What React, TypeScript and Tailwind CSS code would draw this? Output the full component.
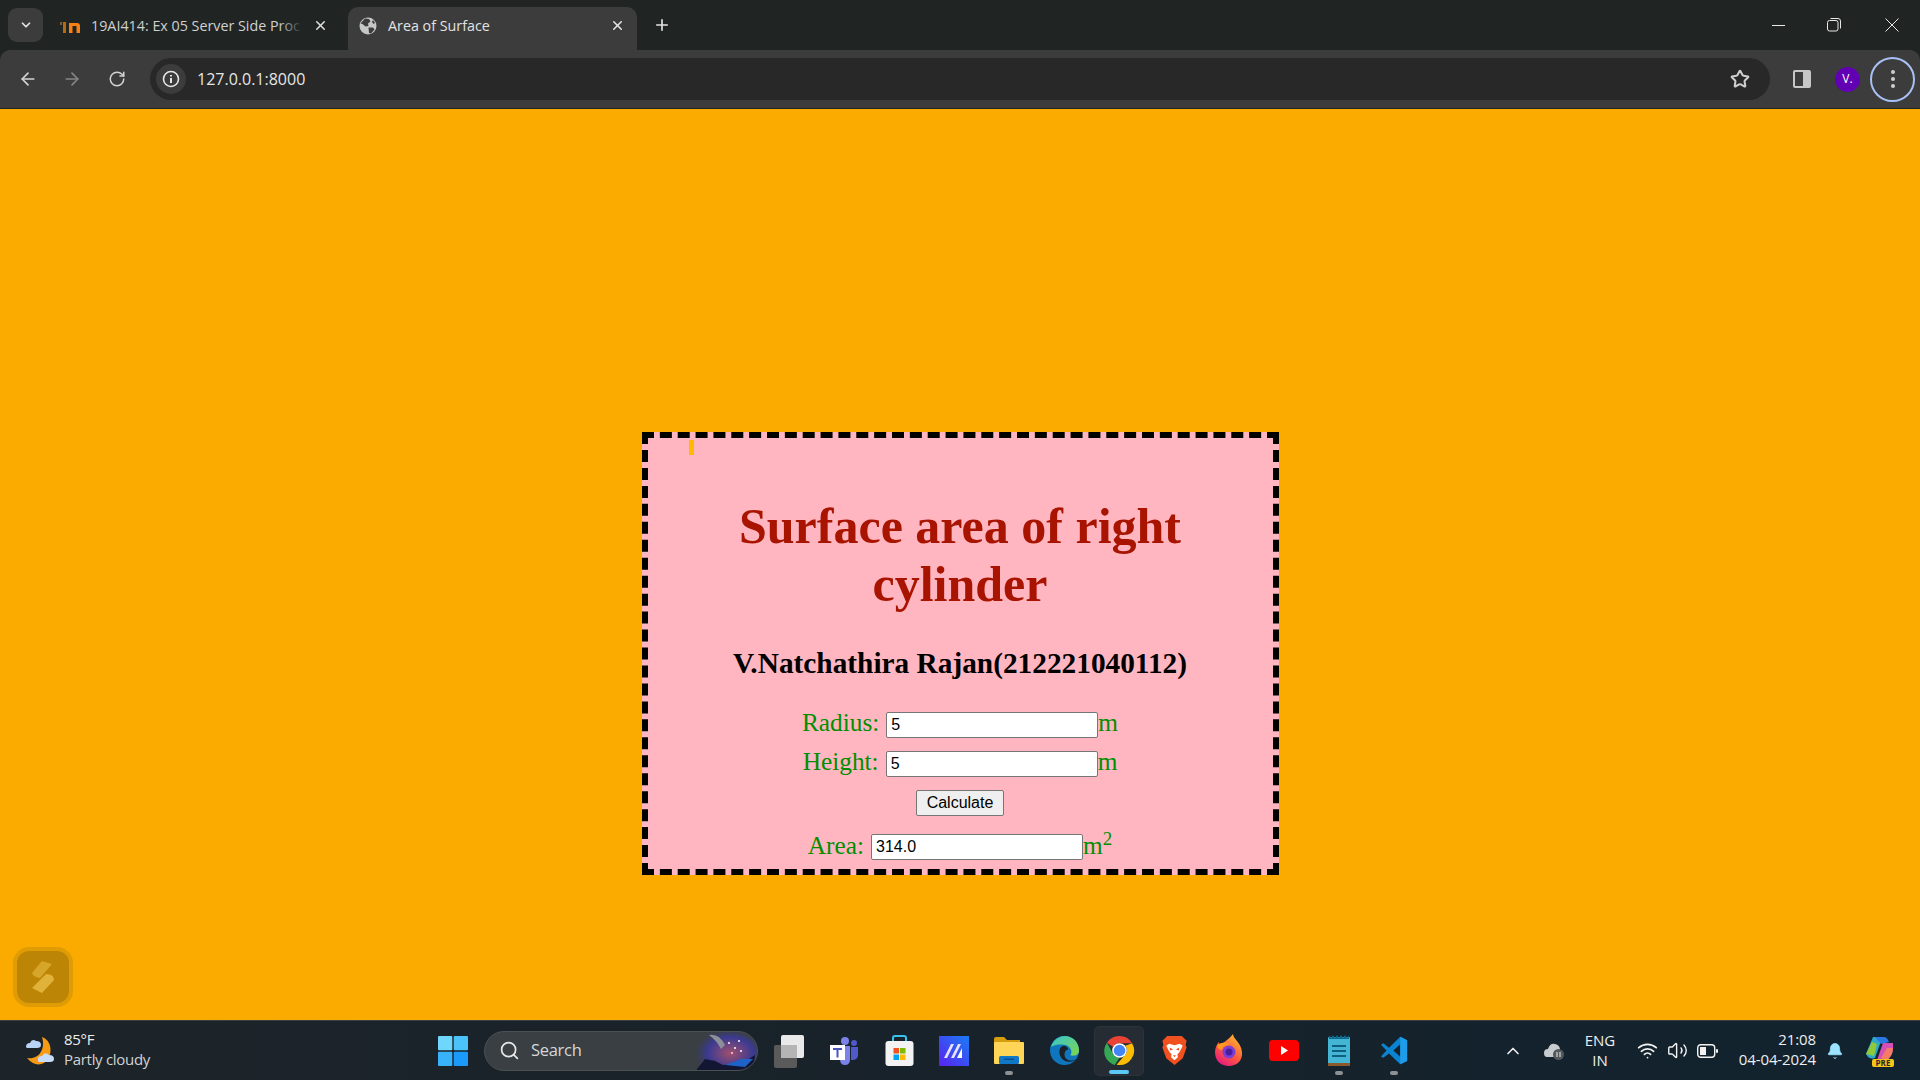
import React from 'react';
import { ArrowLeft, ArrowRight, ChevronDown, ChevronUp, Plus, RotateCw, Star, X, Search, Wifi, Volume2, Bell } from 'lucide-react';

const uiFont = { fontFamily: '"Open Sans", "Noto Sans", sans-serif' };

const Globe = () => (
  <svg width="18" height="18" viewBox="0 0 18 18">
    <circle cx="9" cy="9" r="8.5" fill="#c4c7c5" />
    <path d="M6 1.5 L10 2 L11.5 4.5 L9 6.5 L9.5 9 L6.5 9.5 L3.5 7 L1.5 6.5 Z" fill="#3c3c3c" />
    <path d="M9.5 10.5 L14 10.5 L15.5 12.5 L12 16.5 L10 16 Z M14 3 L16 6 L14.5 7 L13 5 Z" fill="#3c3c3c" />
  </svg>
);

const MoodleMark = () => (
  <svg width="21" height="14" viewBox="0 0 21 14">
    <rect x="0" y="3" width="2" height="3" fill="#8a5a20" />
    <rect x="3" y="3" width="3" height="11" fill="#b86a10" />
    <path d="M9 14 V4 H17 Q20 4 20 7 V14 H16.500 V7 H12.500 V14 Z" fill="#f98012" />
  </svg>
);

const Chrome = () => (
  <svg width="31" height="31" viewBox="0 0 32 32">
    <path d="M16 1 A15 15 0 0 1 29 8.500 H16 A7.500 7.500 0 0 0 9.500 12.300 L3 8 A15 15 0 0 1 16 1Z" fill="#ea4335" />
    <path d="M3 8 L9.500 19.500 A7.500 7.500 0 0 0 16 23.500 L11 31 A15 15 0 0 1 3 8Z" fill="#34a853" />
    <path d="M29 8.500 A15 15 0 0 1 13 30.700 L22.500 19.500 A7.500 7.500 0 0 0 22 11 Z" fill="#fbbc04" />
    <circle cx="16" cy="16" r="7.500" fill="#fff" />
    <circle cx="16" cy="16" r="6" fill="#4285f4" />
  </svg>
);

const Edge = () => (
  <svg width="31" height="31" viewBox="0 0 32 32">
    <defs>
      <linearGradient id="edgeA" x1="0" y1="0" x2="1" y2="1">
        <stop offset="0" stopColor="#37c6d0" />
        <stop offset="1" stopColor="#7fd64a" />
      </linearGradient>
    </defs>
    <circle cx="16" cy="16" r="15" fill="#0f76bd" />
    <path d="M2 13 C4 4 12 1 16 1 C25 1 31 8 31 16 C31 21 26 22 22 21 C25 17 22 11 16 10 C9 9 3 11 2 13Z" fill="url(#edgeA)" />
    <path d="M15 11 C10 12 9 20 14 25 C19 29 25 28 28 25 C23 28 16 26 16 20 C16 17 18 15 20 15 C19 12 17 11 15 11Z" fill="#1b2127" />
  </svg>
);

const Brave = () => (
  <svg width="27" height="31" viewBox="0 0 27 32">
    <path d="M6 1 H21 L26 6 L25 10 L26 13 L22 24 L13.500 31 L5 24 L1 13 L2 10 L1 6 Z" fill="#f1511e" />
    <path d="M8 9 L13.500 10.500 L19 9 L22 11 L19 17 L16.500 20 L17 23 L13.500 26 L10 23 L10.500 20 L8 17 L5 11 Z" fill="#fff" />
    <path d="M8.500 13 L12 15 L9 16Z M18.500 13 L15 15 L18 16Z M12 21 H15 L13.500 23Z" fill="#f1511e" />
  </svg>
);

const Firefox = () => (
  <svg width="30" height="33" viewBox="0 0 30 33">
    <defs>
      <linearGradient id="foxA" x1="0.8" y1="0" x2="0.2" y2="1">
        <stop offset="0" stopColor="#ffbd2e" />
        <stop offset="0.55" stopColor="#ff5a3c" />
        <stop offset="1" stopColor="#e31587" />
      </linearGradient>
    </defs>
    <path d="M19 0 C19 5 27 8 28 18 C29 27 22 32 15 32 C7 32 1 27 1 18 C1 14 3 10 5 8 C5 10 6 11 7 12 C8 8 14 7 19 0Z" fill="url(#foxA)" />
    <circle cx="15" cy="18" r="6.500" fill="#7b3fd6" />
    <circle cx="15" cy="18" r="3.500" fill="#4a1d9e" />
    <path d="M3 12 C7 7 13 9 15 11 C10 11 8 13 8 16 C6 16 4 15 3 12Z" fill="#ff9a1f" />
  </svg>
);

const Store = () => (
  <svg width="29" height="32" viewBox="0 0 29 32">
    <path d="M8 7 V3 Q8 1 10 1 H19 Q21 1 21 3 V7" fill="none" stroke="#35c2f0" strokeWidth="2" />
    <rect x="0.500" y="6" width="28" height="25" rx="3" fill="#f3f3f3" />
    <rect x="8.500" y="13" width="5.500" height="5.500" fill="#f25022" />
    <rect x="15" y="13" width="5.500" height="5.500" fill="#7fba00" />
    <rect x="8.500" y="19.500" width="5.500" height="5.500" fill="#00a4ef" />
    <rect x="15" y="19.500" width="5.500" height="5.500" fill="#ffb900" />
  </svg>
);

const Notepad = () => (
  <svg width="22" height="31" viewBox="0 0 22 31">
    <rect x="0" y="2" width="22" height="29" rx="1" fill="#45b5d6" />
    <rect x="0" y="28" width="22" height="3" fill="#8a5a2c" />
    <path d="M1 0 L3 3 L5 0 L7 3 L9 0 L11 3 L13 0 L15 3 L17 0 L19 3 L21 0 V4 H1Z" fill="#0e6a8c" />
    <rect x="4" y="10" width="14" height="2" fill="#0e5f80" />
    <rect x="4" y="15" width="14" height="2" fill="#0e5f80" />
    <rect x="4" y="20" width="14" height="2" fill="#0e5f80" />
  </svg>
);

const VsCode = () => (
  <svg width="30" height="31" viewBox="0 0 24 24">
    <path d="M17 1 L22.500 3.700 V20.300 L17 23 L8 14.300 L3.500 17.800 L1.500 16.700 L6 12 L1.500 7.300 L3.500 6.200 L8 9.700 Z M17 7 L11.500 12 L17 17 Z" fillRule="evenodd" fill="#0a84d0" />
    <path d="M17 1 L22.500 3.700 V20.300 L17 23 Z" fill="#1e9cea" />
  </svg>
);

const taskIcons: { name: string; icon: React.ReactNode; mark?: 'open' | 'active' }[] = [
  {
    name: 'task view',
    icon: (
      <svg width="32" height="34" viewBox="0 0 32 34">
        <rect x="1" y="11" width="23" height="23" rx="2" fill="#5a5a5a" />
        <rect x="8" y="1" width="23" height="23" rx="2" fill="#e9e9e9" />
        <rect x="8" y="11" width="16" height="13" fill="#b5b5b5" />
      </svg>
    ),
  },
  {
    name: 'teams',
    icon: (
      <svg width="28" height="30" viewBox="0 0 28 30">
        <circle cx="15" cy="5" r="4" fill="#7b83eb" />
        <circle cx="24" cy="7" r="3" fill="#5059c9" />
        <path d="M10 10 H20 V23 Q20 29 15 29 Q10 29 10 23 Z" fill="#7b83eb" />
        <path d="M21 11 H28 V19 Q28 24 22 24 L21 24 Z" fill="#5059c9" />
        <rect x="0" y="9" width="15" height="15" fill="#fff" />
        <path d="M3 12 H12 V14 H8.500 V21.500 H6.500 V14 H3Z" fill="#4b53bc" />
      </svg>
    ),
  },
  { name: 'store', icon: <Store /> },
  {
    name: 'mathpix',
    icon: (
      <svg width="30" height="30" viewBox="0 0 30 30">
        <defs>
          <linearGradient id="appA" x1="1" y1="0" x2="0" y2="1">
            <stop offset="0" stopColor="#1a7cf5" />
            <stop offset="1" stopColor="#5a22f0" />
          </linearGradient>
        </defs>
        <rect width="30" height="30" fill="url(#appA)" />
        <path d="M5 22 L12 8 H15 L8 22 Z M12 22 L19 8 H22 L15 22 Z" fill="#e6e3ff" />
        <path d="M18 22 L23 12 V22 Z" fill="#fff" />
      </svg>
    ),
  },
  {
    name: 'files',
    icon: (
      <svg width="30" height="27" viewBox="0 0 30 27">
        <path d="M0 2 Q0 0 2 0 H10 L13 3 H26 V8 H0Z" fill="#d69d0e" />
        <rect x="0" y="5" width="30" height="22" rx="1" fill="#ffd558" />
        <rect x="5" y="19" width="20" height="8" rx="1.500" fill="#0f78c8" />
        <rect x="10" y="21.500" width="10" height="1.500" fill="#0a4f8c" />
      </svg>
    ),
    mark: 'open',
  },
  { name: 'edge', icon: <Edge /> },
  { name: 'chrome', icon: <Chrome />, mark: 'active' },
  { name: 'brave', icon: <Brave /> },
  { name: 'firefox', icon: <Firefox /> },
  {
    name: 'youtube',
    icon: (
      <svg width="30" height="21" viewBox="0 0 30 21">
        <rect width="30" height="21" rx="4" fill="#f00" />
        <path d="M12 6 L19 10.500 L12 15 Z" fill="#fff" />
      </svg>
    ),
  },
  { name: 'notepad', icon: <Notepad />, mark: 'open' },
  { name: 'vscode', icon: <VsCode />, mark: 'open' },
];

const TaskIcon = ({ icon, mark }: { icon: React.ReactNode; mark?: 'open' | 'active' }) => (
  <div className={`relative flex h-[50px] w-[50px] shrink-0 items-center justify-center rounded-[5px] ${mark === 'active' ? 'border border-[#2b3238] bg-[#252c33]' : ''}`}>
    {icon}
    {mark === 'open' && <span className="absolute bottom-[1px] left-1/2 h-[4px] w-[8px] -translate-x-1/2 rounded-full bg-[#8d9194]" />}
    {mark === 'active' && <span className="absolute bottom-[1px] left-1/2 h-[4px] w-[20px] -translate-x-1/2 rounded-full bg-[#5cc8f8]" />}
  </div>
);

const Browser = () => (
  <header className="h-[109px] shrink-0 bg-[#202423] text-[#e3e3e3]" style={uiFont}>
    <div className="flex h-[50px] items-end">
      <div className="mb-[8px] ml-[8px] flex h-[34px] w-[35px] items-center justify-center rounded-[9px] bg-[#3c3c3c]">
        <ChevronDown size={14} strokeWidth={3} />
      </div>
      <div className="ml-[17px] flex h-[43px] w-[288px] items-center pb-[6px]">
        <MoodleMark />
        <div className="relative ml-[10px] w-[212px] overflow-hidden whitespace-nowrap text-[14.3px] text-[#cfd1d0]">
          19AI414: Ex 05 Server Side Proc
          <span className="absolute inset-y-0 right-0 w-[24px] bg-gradient-to-r from-transparent to-[#202423]" />
        </div>
        <X size={15} strokeWidth={2.5} className="ml-[10px] text-[#dcdcdc]" />
      </div>
      <div className="flex h-[43px] w-[289px] items-center rounded-t-[10px] bg-[#3c3c3c] pb-[6px] pl-[11px]">
        <Globe />
        <span className="ml-[11px] w-[222px] text-[14.3px] text-[#e3e3e3]">Area of Surface</span>
        <X size={15} strokeWidth={2.5} className="text-[#e3e3e3]" />
      </div>
      <Plus size={18} strokeWidth={2.2} className="mb-[16px] ml-[16px]" />
      <div className="ml-auto mb-[18px] flex items-center">
        <span className="h-[1px] w-[13px] bg-[#e8e8e8]" />
        <svg width="14" height="14" viewBox="0 0 14 14" className="ml-[42px]" fill="none" stroke="#e8e8e8">
          <rect x="0.500" y="2.500" width="10.500" height="10.500" rx="2" />
          <path d="M3.500 0.500 H11 Q13.500 0.500 13.500 3 V10.500" />
        </svg>
        <svg width="14" height="14" viewBox="0 0 14 14" className="ml-[44px] mr-[21px]" stroke="#e8e8e8" strokeWidth="1">
          <path d="M0.500 0.500 L13.500 13.500 M13.500 0.500 L0.500 13.500" />
        </svg>
      </div>
    </div>
    <div className="flex h-[58px] items-center rounded-t-[10px] bg-[#3c3c3c]">
      <ArrowLeft size={20} className="ml-[18px] text-[#d4d4d4]" />
      <ArrowRight size={20} className="ml-[24px] text-[#858585]" />
      <RotateCw size={18} className="ml-[26px] text-[#d4d4d4]" />
      <div className="ml-[24px] flex h-[42px] w-[1620px] items-center rounded-full bg-[#282828] pl-[6px]">
        <div className="flex h-[30px] w-[30px] items-center justify-center rounded-full bg-[#3c3c3c]">
          <svg width="18" height="18" viewBox="0 0 18 18" fill="none" stroke="#e6e6e6">
            <circle cx="9" cy="9" r="7.500" strokeWidth="1.600" />
            <path d="M9 8 V13 M9 5 V6.500" strokeWidth="2" />
          </svg>
        </div>
        <span className="ml-[11px] text-[16px] text-[#e6e6e6]">127.0.0.1:8000</span>
        <Star size={20} strokeWidth={2.4} className="ml-auto mr-[20px] text-[#cfcfcf]" />
      </div>
      <svg width="18" height="18" viewBox="0 0 18 18" className="ml-[23px]">
        <rect width="18" height="18" rx="2" fill="#c7c7c7" />
        <rect x="2" y="2" width="8" height="14" fill="#3c3c3c" />
      </svg>
      <div className="ml-[24px] flex h-[25px] w-[25px] items-center justify-center rounded-full bg-[#6200b3] text-[12px] text-white">V.</div>
      <div className="ml-[10px] flex h-[45px] w-[45px] flex-col items-center justify-center gap-[3px] rounded-full border-[2px] border-[#a8c0f5]">
        <span className="h-[4px] w-[4px] rounded-full bg-[#cfcfcf]" />
        <span className="h-[4px] w-[4px] rounded-full bg-[#cfcfcf]" />
        <span className="h-[4px] w-[4px] rounded-full bg-[#cfcfcf]" />
      </div>
    </div>
  </header>
);

const Taskbar = () => (
  <footer className="relative flex h-[60px] shrink-0 items-center border-t border-[#3b3f42] bg-gradient-to-r from-[#1c2429] via-[#18222a] to-[#11232f] text-white" style={uiFont}>
    <svg width="32" height="30" viewBox="0 0 32 30" className="ml-[24px] shrink-0">
      <path d="M18 1 C28 4 30 20 20 27 C14 30 8 28 3 22 C14 24 22 14 18 1Z" fill="#f79a14" />
      <path d="M2 11 Q2 7 6 7 Q8 2 12 5 Q17 5 17 9 Q17 12 13 12 H4 Q2 12 2 11Z" fill="#b9d4f7" />
      <path d="M14 25 Q13 20 18 20 Q21 15 25 19 Q30 19 30 23 Q30 26 26 26 H16 Q14 26 14 25Z" fill="#c6dcf8" />
    </svg>
    <div className="mb-[4px] ml-[8px] flex w-[120px] shrink-0 flex-col text-[15px] leading-[20px] tracking-[-0.3px] text-[#eceeee]">
      <span>85°F</span>
      <span className="text-[#d0d3d4]">Partly cloudy</span>
    </div>
    <svg width="30" height="30" viewBox="0 0 30 30" className="ml-[254px] shrink-0">
      <rect x="0" y="0" width="14.300" height="14.300" rx="1" fill="#6fd6fc" />
      <rect x="15.700" y="0" width="14.300" height="14.300" rx="1" fill="#4cc2fa" />
      <rect x="0" y="15.700" width="14.300" height="14.300" rx="1" fill="#38b2fb" />
      <rect x="15.700" y="15.700" width="14.300" height="14.300" rx="1" fill="#1a9bfb" />
    </svg>
    <div className="relative ml-[16px] flex h-[40px] w-[274px] shrink-0 items-center overflow-hidden rounded-full border border-[#4b5053] bg-[#3a3f43] pl-[14px]">
      <Search size={21} className="text-[#e5e5e5]" />
      <span className="ml-[11px] text-[16.5px] tracking-[-0.3px] text-[#d5d7d8]">Search</span>
      <svg width="62" height="40" viewBox="0 0 62 40" className="ml-auto shrink-0">
        <defs>
          <radialGradient id="night" cx="0.55" cy="0.5" r="0.6">
            <stop offset="0" stopColor="#a0506e" />
            <stop offset="0.6" stopColor="#3a3a92" />
            <stop offset="1" stopColor="#3a3f43" stopOpacity="0" />
          </radialGradient>
        </defs>
        <ellipse cx="32" cy="22" rx="32" ry="22" fill="url(#night)" />
        <path d="M14 4 Q24 2 30 14 L26 18 Q22 10 14 4Z" fill="#8d8f98" />
        <path d="M2 38 L10 28 L20 30 L28 34 L48 32 L60 24 L58 40 H2Z" fill="#121633" />
        <path d="M30 34 L46 28 L58 28 L50 36Z" fill="#1f62c8" />
        <circle cx="34" cy="12" r="1" fill="#fff" />
        <circle cx="40" cy="17" r="1" fill="#fff" />
        <circle cx="44" cy="10" r="1" fill="#fff" />
        <circle cx="37" cy="22" r="1" fill="#ffd0d0" />
        <circle cx="46" cy="20" r="1" fill="#fff" />
      </svg>
    </div>
    <div className="ml-[6px] flex shrink-0 gap-[5px]">
      {taskIcons.map((t) => (
        <TaskIcon key={t.name} icon={t.icon} mark={t.mark} />
      ))}
    </div>
    <ChevronUp size={20} strokeWidth={2} className="ml-[84px] shrink-0 text-[#eeeeee]" />
    <svg width="22" height="18" viewBox="0 0 22 18" className="ml-[20px] shrink-0">
      <path d="M1 11 Q1 7 5 7 Q7 1 12 2 Q17 3 17 8 Q20 9 19 12 L16 15 H4 Q1 15 1 11Z" fill="#c9ccce" />
      <circle cx="15.500" cy="12.500" r="5.500" fill="#53585b" />
      <path d="M14 10 V15 M17 10 V15" stroke="#eee" strokeWidth="1" />
    </svg>
    <div className="mb-[2px] ml-[15px] flex w-[40px] shrink-0 flex-col items-center text-[15px] leading-[20px] text-[#eeeeee]">
      <span>ENG</span>
      <span>IN</span>
    </div>
    <Wifi size={21} strokeWidth={2} className="ml-[17px] shrink-0 text-[#f2f2f2]" />
    <Volume2 size={21} strokeWidth={1.6} className="ml-[9px] shrink-0 text-[#f2f2f2]" />
    <svg width="21" height="14" viewBox="0 0 21 14" className="ml-[9px] shrink-0">
      <rect x="0.700" y="0.700" width="17" height="12.600" rx="3" fill="none" stroke="#f2f2f2" strokeWidth="1.400" />
      <rect x="3" y="3" width="6" height="8" fill="#f2f2f2" />
      <rect x="19" y="5" width="2" height="4" rx="1" fill="#f2f2f2" />
    </svg>
    <div className="mb-[4px] ml-[8px] flex w-[90px] shrink-0 flex-col items-end text-[15px] leading-[20px] tracking-[-0.1px] text-[#eeeeee]">
      <span>21:08</span>
      <span className="whitespace-nowrap">04-04-2024</span>
    </div>
    <Bell size={18} fill="#9ae4ff" strokeWidth={1} className="ml-[10px] shrink-0 text-[#9ae4ff]" />
    <div className="relative ml-[21px] h-[30px] w-[30px] shrink-0">
      <svg width="30" height="28" viewBox="0 0 30 28">
        <path d="M8 1 H19 L15 8 L10 22 Q4 24 1 18 Z" fill="#2ea8c8" />
        <path d="M1 18 L7 6 L12 8 L9 20Z" fill="#8fc93a" />
        <path d="M10 1 H19 Q22 1 24 6 L16 8Z" fill="#2b78e4" />
        <path d="M18 7 H28 Q29 18 22 24 H12 Z" fill="#d44fb6" />
        <path d="M16 22 L22 12 H28 Q28 20 22 24Z" fill="#f47b66" />
      </svg>
      <span className="absolute -bottom-[1px] left-[7px] flex h-[8px] w-[22px] items-center justify-center rounded-[2px] bg-[#f5c518] text-[8px] font-bold leading-none text-[#2a2a2a]">PRE</span>
    </div>
  </footer>
);

export default function App() {
  return (
    <div className="flex h-screen w-full flex-col overflow-hidden">
      <Browser />
      <main className="relative flex-1 bg-[#fbaa00] pt-[323px]" style={{ fontFamily: '"Liberation Serif", serif' }}>
        <div className="relative mx-auto h-[443px] w-[637px] border-[6px] border-dashed border-black bg-[#ffb6c1] text-center">
          <span className="absolute left-[41px] top-[2px] h-[15px] w-[5px] bg-[#ffba00]" />
          <h1 className="mx-auto mt-[59px] w-[500px] text-[50px] font-bold leading-[58px] text-[#a81400]">
            Surface area of right cylinder
          </h1>
          <h2 className="mt-[33px] text-[29.33px] font-bold leading-[34px] text-black">
            V.Natchathira Rajan(212221040112)
          </h2>
          <form className="mt-[30px] text-[25.33px] leading-[25px] text-[#008f00]">
            <div className="flex h-[25px] items-center justify-center">
              <label>Radius:</label>
              <input readOnly value="5" className="ml-[7px] mt-[4px] h-[26px] w-[212px] rounded-[2px] border border-[#767676] bg-white px-[4px] text-[16px] text-black" style={{ fontFamily: '"Liberation Sans", sans-serif' }} />
              <span>m</span>
            </div>
            <div className="mt-[14px] flex h-[25px] items-center justify-center">
              <label>Height:</label>
              <input readOnly value="5" className="ml-[7px] mt-[4px] h-[26px] w-[212px] rounded-[2px] border border-[#767676] bg-white px-[4px] text-[16px] text-black" style={{ fontFamily: '"Liberation Sans", sans-serif' }} />
              <span>m</span>
            </div>
            <button type="button" className="mt-[16px] h-[26px] w-[88px] rounded-[2px] border border-[#767676] bg-[#efefef] text-[16px] leading-none text-black" style={{ fontFamily: '"Liberation Sans", sans-serif' }}>
              Calculate
            </button>
            <div className="mt-[17px] flex h-[25px] items-center justify-center">
              <label>Area:</label>
              <input readOnly value="314.0" className="ml-[7px] mt-[3px] h-[26px] w-[212px] rounded-[2px] border border-[#767676] bg-white px-[4px] text-[16px] text-black" style={{ fontFamily: '"Liberation Sans", sans-serif' }} />
              <span>m<sup className="text-[19px]">2</sup></span>
            </div>
          </form>
        </div>
        <div className="absolute bottom-[13px] left-[13px] flex h-[60px] w-[60px] items-center justify-center rounded-[16px] bg-[#e09c04]">
          <div className="flex h-[52px] w-[52px] items-center justify-center rounded-[12px] bg-[#bd8505]">
            <svg width="26" height="34" viewBox="0 0 26 34">
              <path d="M12 1 L22 4 L10 18 Q3 17 2 13 Z" fill="#d6a62a" />
              <path d="M16 14 Q24 14 24 20 L12 33 L2 28 Z" fill="#e0b23a" />
            </svg>
          </div>
        </div>
      </main>
      <Taskbar />
    </div>
  );
}
